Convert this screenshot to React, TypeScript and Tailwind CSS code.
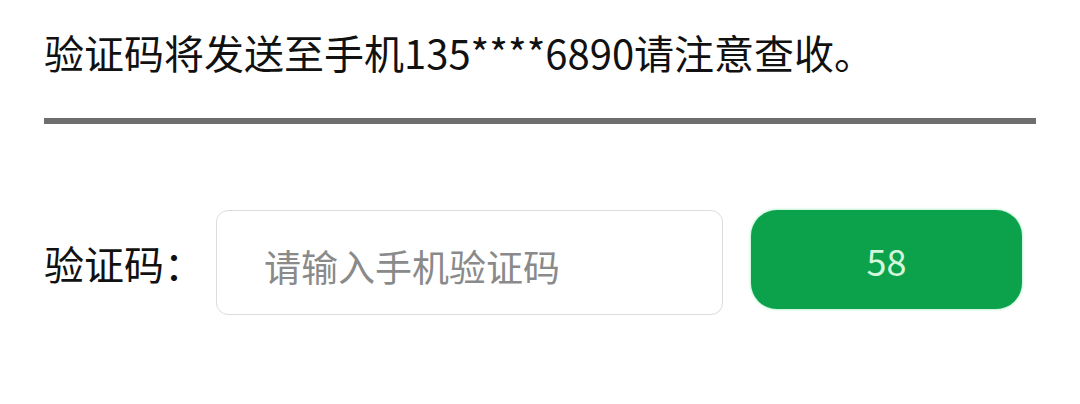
export default function App() {
  return (
    <div
      className="w-[1080px] h-[404px] bg-white px-[44px] pt-[24px]"
      style={{ fontFamily: '"Noto Sans CJK SC", "Noto Sans", sans-serif' }}
    >
      <p className="text-[40px] leading-[56px] text-[#111]">
        验证码将发送至手机135****6890请注意查收。
      </p>
      <div className="mt-[38px] h-[6px] w-[992px] bg-[#6e6e6e]" />

      <div className="mt-[86px] flex items-start">
        <label className="h-[105px] flex items-center text-[40px] text-[#111] leading-none">
          验证码：
        </label>
        <input
          type="text"
          placeholder="请输入手机验证码"
          className="ml-[12px] h-[105px] w-[507px] rounded-[12px] border border-[#dcdcdc] bg-white pl-[47px] pt-[6px] text-[37px] text-[#333] placeholder:text-[#8a8a8a] outline-none"
        />
        <button className="ml-[28px] h-[99px] w-[271px] rounded-[26px] bg-[#0ca24b] text-[36px] text-[#d2f7dc] shadow-[0_0_3px_#7de8a8]">
          58
        </button>
      </div>
    </div>
  )
}
